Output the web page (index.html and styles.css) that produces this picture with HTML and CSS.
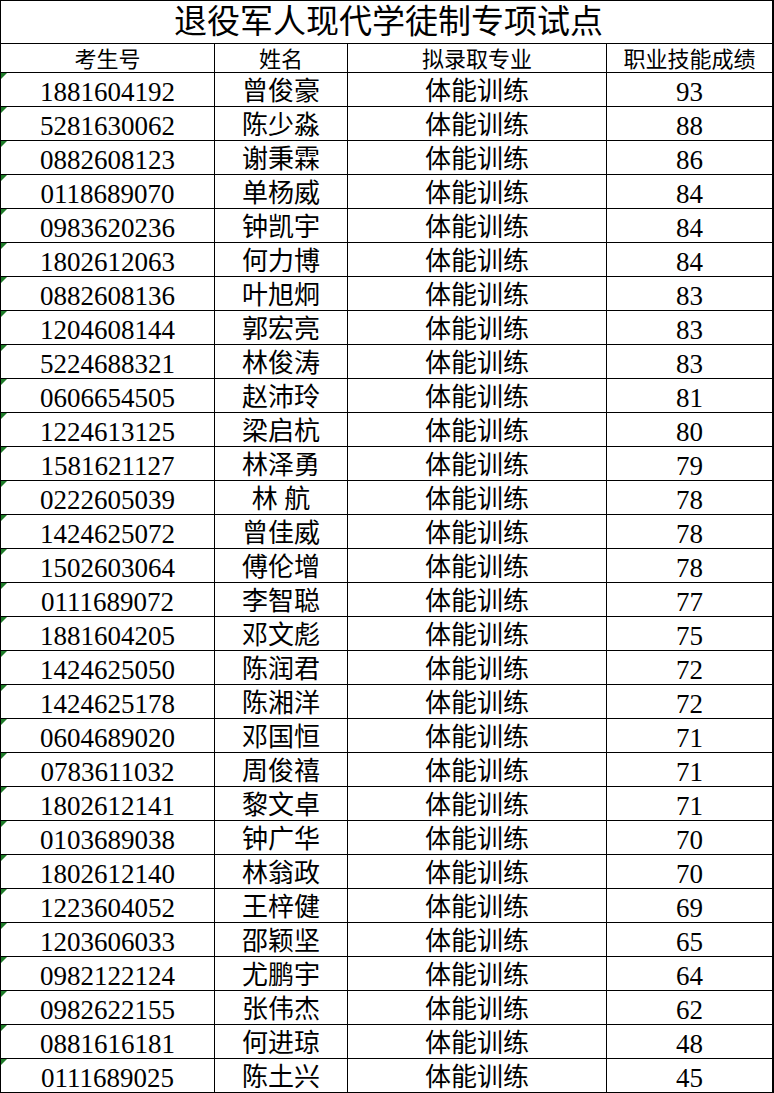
FILE: index.html
```html
<!DOCTYPE html>
<html lang="zh-CN">
<head>
<meta charset="utf-8">
<title>退役军人现代学徒制专项试点</title>
<link rel="stylesheet" href="styles.css">
</head>
<body>
<div class="sheet">
  <div class="cell title">退役军人现代学徒制专项试点</div>
  <div class="cell head">考生号</div>
  <div class="cell head">姓名</div>
  <div class="cell head">拟录取专业</div>
  <div class="cell head last">职业技能成绩</div>

  <div class="cell id">1881604192</div><div class="cell name">曾俊豪</div><div class="cell major">体能训练</div><div class="cell score last">93</div>
  <div class="cell id">5281630062</div><div class="cell name">陈少淼</div><div class="cell major">体能训练</div><div class="cell score last">88</div>
  <div class="cell id">0882608123</div><div class="cell name">谢秉霖</div><div class="cell major">体能训练</div><div class="cell score last">86</div>
  <div class="cell id">0118689070</div><div class="cell name">单杨威</div><div class="cell major">体能训练</div><div class="cell score last">84</div>
  <div class="cell id">0983620236</div><div class="cell name">钟凯宇</div><div class="cell major">体能训练</div><div class="cell score last">84</div>
  <div class="cell id">1802612063</div><div class="cell name">何力博</div><div class="cell major">体能训练</div><div class="cell score last">84</div>
  <div class="cell id">0882608136</div><div class="cell name">叶旭炯</div><div class="cell major">体能训练</div><div class="cell score last">83</div>
  <div class="cell id">1204608144</div><div class="cell name">郭宏亮</div><div class="cell major">体能训练</div><div class="cell score last">83</div>
  <div class="cell id">5224688321</div><div class="cell name">林俊涛</div><div class="cell major">体能训练</div><div class="cell score last">83</div>
  <div class="cell id">0606654505</div><div class="cell name">赵沛玲</div><div class="cell major">体能训练</div><div class="cell score last">81</div>
  <div class="cell id">1224613125</div><div class="cell name">梁启杭</div><div class="cell major">体能训练</div><div class="cell score last">80</div>
  <div class="cell id">1581621127</div><div class="cell name">林泽勇</div><div class="cell major">体能训练</div><div class="cell score last">79</div>
  <div class="cell id">0222605039</div><div class="cell name">林&nbsp;航</div><div class="cell major">体能训练</div><div class="cell score last">78</div>
  <div class="cell id">1424625072</div><div class="cell name">曾佳威</div><div class="cell major">体能训练</div><div class="cell score last">78</div>
  <div class="cell id">1502603064</div><div class="cell name">傅伦增</div><div class="cell major">体能训练</div><div class="cell score last">78</div>
  <div class="cell id">0111689072</div><div class="cell name">李智聪</div><div class="cell major">体能训练</div><div class="cell score last">77</div>
  <div class="cell id">1881604205</div><div class="cell name">邓文彪</div><div class="cell major">体能训练</div><div class="cell score last">75</div>
  <div class="cell id">1424625050</div><div class="cell name">陈润君</div><div class="cell major">体能训练</div><div class="cell score last">72</div>
  <div class="cell id">1424625178</div><div class="cell name">陈湘洋</div><div class="cell major">体能训练</div><div class="cell score last">72</div>
  <div class="cell id">0604689020</div><div class="cell name">邓国恒</div><div class="cell major">体能训练</div><div class="cell score last">71</div>
  <div class="cell id">0783611032</div><div class="cell name">周俊禧</div><div class="cell major">体能训练</div><div class="cell score last">71</div>
  <div class="cell id">1802612141</div><div class="cell name">黎文卓</div><div class="cell major">体能训练</div><div class="cell score last">71</div>
  <div class="cell id">0103689038</div><div class="cell name">钟广华</div><div class="cell major">体能训练</div><div class="cell score last">70</div>
  <div class="cell id">1802612140</div><div class="cell name">林翁政</div><div class="cell major">体能训练</div><div class="cell score last">70</div>
  <div class="cell id">1223604052</div><div class="cell name">王梓健</div><div class="cell major">体能训练</div><div class="cell score last">69</div>
  <div class="cell id">1203606033</div><div class="cell name">邵颖坚</div><div class="cell major">体能训练</div><div class="cell score last">65</div>
  <div class="cell id">0982122124</div><div class="cell name">尤鹏宇</div><div class="cell major">体能训练</div><div class="cell score last">64</div>
  <div class="cell id">0982622155</div><div class="cell name">张伟杰</div><div class="cell major">体能训练</div><div class="cell score last">62</div>
  <div class="cell id">0881616181</div><div class="cell name">何进琼</div><div class="cell major">体能训练</div><div class="cell score last">48</div>
  <div class="cell id">0111689025</div><div class="cell name">陈土兴</div><div class="cell major">体能训练</div><div class="cell score last">45</div>
</div>
</body>
</html>
```

FILE: styles.css
```css
html, body {
  margin: 0;
  padding: 0;
  background: #ffffff;
}

.sheet {
  display: grid;
  grid-template-columns: 214px 133px 259px 167px;
  grid-template-rows: 43px 29px;
  grid-auto-rows: 34px;
  width: 774px;
  box-sizing: border-box;
  border-top: 1px solid #000;
  border-left: 1px solid #000;
  color: #000;
  font-family: "Liberation Serif", "Noto Sans CJK SC", serif;
}

.cell {
  position: relative;
  box-sizing: border-box;
  border-right: 1px solid #000;
  border-bottom: 1px solid #000;
  display: flex;
  align-items: flex-end;
  justify-content: center;
  line-height: 1;
  white-space: nowrap;
}

.cell.last {
  border-right-width: 2px;
}

.title {
  grid-column: 1 / -1;
  border-right-width: 2px;
  font-size: 33px;
  padding-bottom: 4px;
  padding-left: 4px;
}

.head {
  font-size: 22px;
  padding-bottom: 1px;
}

.id,
.score {
  font-size: 27px;
  padding-bottom: 0;
}

.name,
.major {
  font-size: 26px;
  padding-bottom: 1px;
}

.id::before {
  content: "";
  position: absolute;
  top: 0;
  left: 0;
  width: 0;
  height: 0;
  border-top: 6px solid #1d7a27;
  border-right: 6px solid transparent;
}
```
